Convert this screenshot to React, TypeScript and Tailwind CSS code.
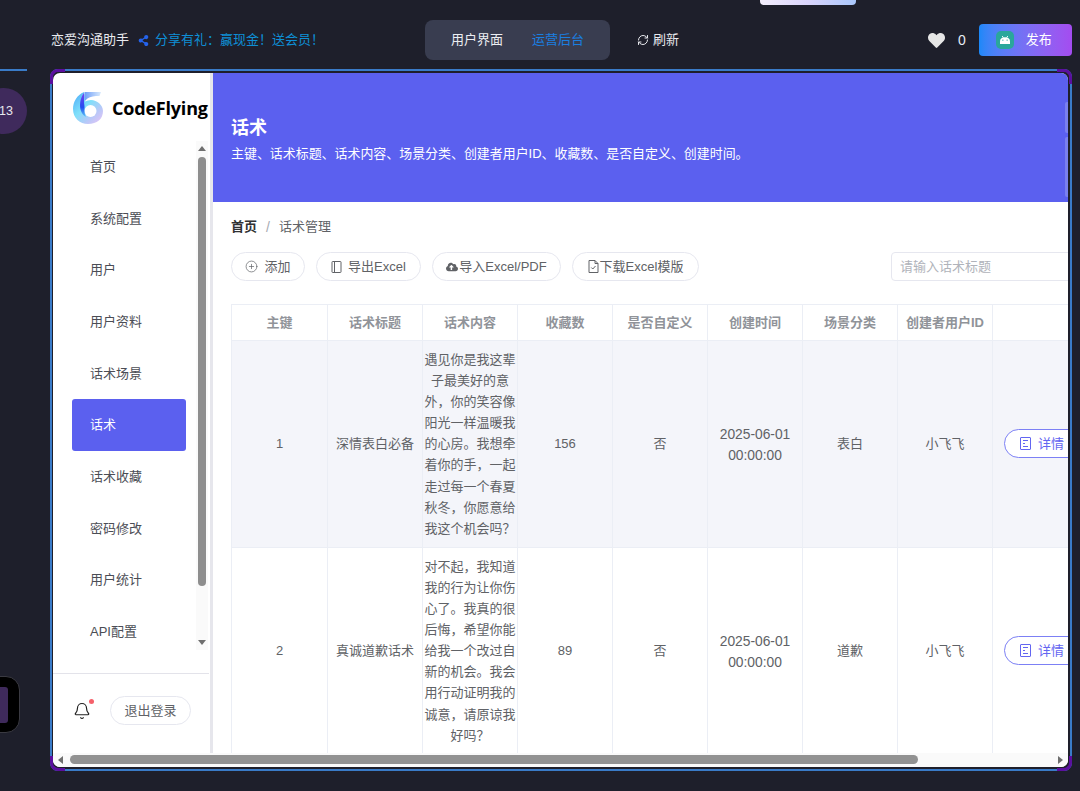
import React from "react";
import { Bell, CirclePlus, RefreshCw } from "lucide-react";
import { FaCloudUploadAlt, FaHeart, FaShareAlt } from "react-icons/fa";

const menu = ["首页", "系统配置", "用户", "用户资料", "话术场景", "话术", "话术收藏", "密码修改", "用户统计", "API配置"];

const columns = ["主键", "话术标题", "话术内容", "收藏数", "是否自定义", "创建时间", "场景分类", "创建者用户ID", ""];
const columnWidths = ["w-[96px]", "w-[95px]", "w-[95px]", "w-[95px]", "w-[95px]", "w-[95px]", "w-[95px]", "w-[95px]", "w-[139px]"];

const rows = [
  {
    id: "1",
    title: "深情表白必备",
    content: "遇见你是我这辈子最美好的意外，你的笑容像阳光一样温暖我的心房。我想牵着你的手，一起走过每一个春夏秋冬，你愿意给我这个机会吗？",
    count: "156",
    scene: "表白",
    bg: "bg-[#f4f5fa]",
  },
  {
    id: "2",
    title: "真诚道歉话术",
    content: "对不起，我知道我的行为让你伤心了。我真的很后悔，希望你能给我一个改过自新的机会。我会用行动证明我的诚意，请原谅我好吗？",
    count: "89",
    scene: "道歉",
    bg: "bg-white",
  },
];

function Logo() {
  return (
    <svg width="31" height="32" viewBox="0 0 31 32" className="shrink-0">
      <defs>
        <linearGradient id="outer" x1="0" y1="0" x2="0.9" y2="1">
          <stop offset="0" stopColor="#4aa8f8" />
          <stop offset="0.45" stopColor="#7fe0fa" />
          <stop offset="0.75" stopColor="#b9c8f8" />
          <stop offset="1" stopColor="#e2c4f6" />
        </linearGradient>
        <linearGradient id="bar" x1="0" y1="0" x2="1" y2="0">
          <stop offset="0" stopColor="#6f9ef8" />
          <stop offset="1" stopColor="#d9eafc" />
        </linearGradient>
        <linearGradient id="inner" x1="0" y1="0" x2="0" y2="1">
          <stop offset="0" stopColor="#7a3cf0" />
          <stop offset="0.6" stopColor="#2450f0" />
          <stop offset="1" stopColor="#5ac8f8" />
        </linearGradient>
      </defs>
      <path d="M11 0C4 3 0 10 0 17c0 9 7 15 15 15 9 0 15-5 15-13 0-6-6-11-12-11-2 0-4 .5-6 1.500 0-3 0-6-1-9.500Z" fill="url(#outer)" />
      <circle cx="17.500" cy="19" r="6" fill="#fff" />
      <path d="M11 1C7 6 6 14 8 19c1 3 3 5 5 6-1.500-3-2-6-1.500-9 .3-2-.5-4-.5-6 0-3.500.5-6 0-9Z" fill="url(#inner)" />
      <path d="M11.500 0H28l-1.500 4c-5 0-9 .5-12 2.500-1 .7-1.800 1.500-2.500 2.500 0-3.500-.3-6-.5-9Z" fill="url(#bar)" />
    </svg>
  );
}

function Android() {
  return (
    <svg width="10" height="8" viewBox="0 0 10 8" fill="#fff">
      <path d="M0 8V5.200C0 2.800 2.200 1.200 5 1.200s5 1.600 5 4V8Z" />
      <path d="M2.200 0l1.200 1.800M7.800 0 6.600 1.800" stroke="#fff" strokeWidth=".9" />
      <rect x="2.300" y="3.600" width="1.100" height="1.100" fill="#2aa79b" />
      <rect x="6.600" y="3.600" width="1.100" height="1.100" fill="#2aa79b" />
    </svg>
  );
}

function BookIcon() {
  return (
    <svg width="11" height="12" viewBox="0 0 11 12" fill="none" stroke="currentColor" strokeWidth="1">
      <rect x="1" y=".5" width="9" height="11" rx=".6" />
      <path d="M3.500.5v11" />
    </svg>
  );
}

function FileCheckIcon() {
  return (
    <svg width="11" height="13" viewBox="0 0 11 13" fill="none" stroke="currentColor" strokeWidth="1">
      <path d="M1 .5h6l3 3v9H1Z" />
      <path d="M7 .5v3h3M3.300 7.500l1.500 1.500 2.700-3" />
    </svg>
  );
}

function DetailIcon() {
  return (
    <svg width="11" height="13" viewBox="0 0 11 13" fill="none" stroke="currentColor" strokeWidth="1">
      <rect x=".5" y=".5" width="10" height="12" rx=".5" />
      <path d="M3 3.500h5M3 6.500h2M3 9.500h5" />
    </svg>
  );
}

function Tool({ icon, label, gap, width }: { icon: React.ReactNode; label: string; gap: string; width: string }) {
  return (
    <button className={`flex h-[29px] items-center justify-center rounded-full border border-[#e6e7ef] bg-white text-[13px] text-[#606266] ${gap} ${width}`}>
      {icon}
      <span>{label}</span>
    </button>
  );
}

function Triangle({ dir }: { dir: "up" | "down" | "left" | "right" }) {
  const cls = {
    up: "border-x-[4px] border-b-[5px] border-x-transparent border-b-[#6f6f6f]",
    down: "border-x-[4px] border-t-[5px] border-x-transparent border-t-[#6f6f6f]",
    left: "border-y-[4px] border-r-[5px] border-y-transparent border-r-[#6f6f6f]",
    right: "border-y-[4px] border-l-[5px] border-y-transparent border-l-[#6f6f6f]",
  }[dir];
  return <span className={`block h-0 w-0 ${cls}`} />;
}

export default function App() {
  return (
    <div className="relative flex h-[791px] w-[1080px] flex-col overflow-hidden bg-[#1e1f2b] font-['Liberation_Sans','Noto_Sans_CJK_SC',sans-serif]">
      <div className="absolute left-[760px] top-0 h-[5px] w-[96px] rounded-b-[4px] bg-gradient-to-r from-[#f4eefc] via-[#d9d4fb] to-[#a9c6fb]" />

      <header className="flex h-[69px] shrink-0 items-center pl-[51px] pt-[11px] text-[13px]">
        <span className="text-[#e8e9ee]">恋爱沟通助手</span>
        <FaShareAlt className="ml-[9px] text-[#2563eb]" size={11} />
        <span className="ml-[6px] w-[270px] text-[#0e8fd6]">分享有礼：赢现金！送会员！</span>
        <nav className="flex h-[40px] w-[185px] items-center rounded-[8px] bg-[#393d50] pl-[26px]">
          <span className="text-[#eceef2]">用户界面</span>
          <span className="ml-[29px] text-[#1a7fe0]">运营后台</span>
        </nav>
        <RefreshCw className="ml-[27px] text-[#e8e9ee]" size={12} strokeWidth={2} />
        <span className="ml-[4px] text-[#e8e9ee]">刷新</span>
        <FaHeart className="ml-[249px] text-[#e6e6e6]" size={17} />
        <span className="ml-[13px] text-[14px] text-[#e6ecf5]">0</span>
        <button className="ml-[13px] flex h-[32px] w-[93px] items-center rounded-[4px] bg-gradient-to-r from-[#1a88f8] to-[#a44cf0] pl-[17px] text-white">
          <span className="flex h-[18px] w-[18px] items-center justify-center rounded-[5px] bg-[#2aa79b]">
            <Android />
          </span>
          <span className="ml-[12px]">发布</span>
        </button>
      </header>

      <div className="flex min-h-0 flex-1">
        <aside className="relative w-[50px] shrink-0">
          <div className="h-[2px] w-[27px] bg-[#3a7bc8]" />
          <div className="absolute -left-[20px] top-[19px] flex h-[46px] w-[47px] items-center justify-end rounded-full bg-[#3f2a5c] pr-[14px] text-[12.5px] text-[#e8e9ee]">
            13
          </div>
          <div className="absolute -left-[30px] top-[607px] flex h-[57px] w-[50px] items-center rounded-[14px] border border-[#3a3a42] bg-black">
            <div className="ml-[17px] h-[36px] w-[20px] rounded-[3px] bg-[#3f2a5c]" />
          </div>
        </aside>

        <main className="relative h-[702px] w-[1022px] shrink-0 rounded-[8px] border-2 border-[#3a7bc8] pb-[2px] pl-[1px] pr-[2px] pt-[2px]">
          <span className="absolute -left-[2px] -top-[2px] h-[15px] w-[15px] rounded-tl-[8px] border-l-[3px] border-t-[3px] border-[#5b0f9e]" />
          <span className="absolute -right-[2px] -top-[2px] h-[15px] w-[15px] rounded-tr-[8px] border-r-[3px] border-t-[3px] border-[#5b0f9e]" />
          <span className="absolute -bottom-[2px] -left-[2px] h-[15px] w-[15px] rounded-bl-[8px] border-b-[3px] border-l-[3px] border-[#5b0f9e]" />
          <span className="absolute -bottom-[2px] -right-[2px] h-[15px] w-[15px] rounded-br-[8px] border-b-[3px] border-r-[3px] border-[#5b0f9e]" />

          <div className="flex h-[694px] w-[1015px] flex-col overflow-hidden rounded-[7px] bg-white">
            <div className="flex h-[680px] shrink-0">
              <div className="flex w-[160px] shrink-0 flex-col border-r-[3px] border-[#e6e6ec]">
                <div className="flex h-[68px] shrink-0 items-center pl-[20px] pt-[2px]">
                  <Logo />
                  <span className="ml-[8px] font-['Open_Sans',sans-serif] text-[18px] font-bold tracking-[-0.2px] text-black">CodeFlying</span>
                </div>
                <div className="flex h-[509px] shrink-0">
                  <ul className="w-[143px] shrink-0 overflow-hidden">
                    {menu.map((m) => (
                      <li
                        key={m}
                        className={`ml-[19px] flex h-[51.67px] w-[114px] items-center rounded-[3px] pl-[18px] text-[13px] ${m === "话术" ? "bg-[#5b60ef] text-white" : "text-[#4b4d55]"}`}
                      >
                        {m}
                      </li>
                    ))}
                  </ul>
                  <div className="flex w-[12px] shrink-0 flex-col items-center bg-[#fafafa] pt-[5px]">
                    <Triangle dir="up" />
                    <div className="mt-[6px] h-[429px] w-[8px] rounded-full bg-[#8e8e8e]" />
                    <div className="mt-auto pb-[5px]">
                      <Triangle dir="down" />
                    </div>
                  </div>
                </div>
                <div className="mt-[23px] w-[156px] flex-1 border-t border-[#e3e3ea] pl-[20px] pt-[22px]">
                  <div className="flex items-center">
                    <div className="relative">
                      <Bell size={18} strokeWidth={1.6} className="text-[#222]" />
                      <span className="absolute -right-[3px] -top-[3px] h-[5px] w-[5px] rounded-full bg-[#f5606a]" />
                    </div>
                    <button className="ml-[19px] h-[29px] w-[81px] rounded-full border border-[#e6e7ef] text-[13px] text-[#606266]">退出登录</button>
                  </div>
                </div>
              </div>

              <div className="relative min-w-0 flex-1 overflow-hidden">
                <span className="absolute right-0 top-[29px] h-[31px] w-[3px] rounded-l-[2px] bg-[#7a80f0]" />
                <span className="absolute right-0 top-[64px] h-[60px] w-[3px] rounded-l-[2px] bg-[#7a80f0]" />
                <div className="h-[129px] bg-[#5b60ef] pl-[18px] pt-[43px] text-white">
                  <h1 className="text-[18px] font-bold leading-[24px]">话术</h1>
                  <p className="mt-[5px] text-[12.95px] leading-[18px]">主键、话术标题、话术内容、场景分类、创建者用户ID、收藏数、是否自定义、创建时间。</p>
                </div>
                <div className="w-[918px] pl-[18px]">
                  <div className="flex h-[50px] items-center text-[13px]">
                    <span className="font-bold text-[#303133]">首页</span>
                    <span className="mx-[9px] text-[14px] text-[#a8abb2]">/</span>
                    <span className="text-[#606266]">话术管理</span>
                  </div>
                  <div className="flex items-center">
                    <Tool icon={<CirclePlus size={13} strokeWidth={1.3} />} label="添加" gap="gap-[6px]" width="w-[74px]" />
                    <Tool icon={<BookIcon />} label="导出Excel" gap="gap-[6px]" width="ml-[11px] w-[105px]" />
                    <Tool icon={<FaCloudUploadAlt size={12} />} label="导入Excel/PDF" gap="gap-[1px]" width="ml-[11px] w-[129px]" />
                    <Tool icon={<FileCheckIcon />} label="下载Excel模版" gap="gap-[1px]" width="ml-[11px] w-[127px]" />
                    <div className="ml-auto flex h-[29px] w-[240px] items-center rounded-[4px] border border-[#e6e7ef] pl-[8px] text-[13px] text-[#b0b3ba]">
                      请输入话术标题
                    </div>
                  </div>
                  <table className="mt-[23px] w-[900px] table-fixed border-collapse text-center text-[13px] leading-[21.1px] text-[#606266]">
                    <thead>
                      <tr className="h-[36px]">
                        {columns.map((c, i) => (
                          <th key={i} className={`border border-[#ebeef5] px-0 font-bold text-[#909399] ${columnWidths[i]}`}>
                            {c}
                          </th>
                        ))}
                      </tr>
                    </thead>
                    <tbody>
                      {rows.map((r) => (
                        <tr key={r.id} className={r.bg}>
                          <td className="border border-[#ebeef5]">{r.id}</td>
                          <td className="border border-[#ebeef5]">{r.title}</td>
                          <td className="border border-[#ebeef5] px-0 py-[8px]">{r.content}</td>
                          <td className="border border-[#ebeef5]">{r.count}</td>
                          <td className="border border-[#ebeef5]">否</td>
                          <td className="border border-[#ebeef5] pt-[2px] text-[13.8px]">
                            2025-06-01
                            <br />
                            00:00:00
                          </td>
                          <td className="border border-[#ebeef5]">{r.scene}</td>
                          <td className="border border-[#ebeef5]">小飞飞</td>
                          <td className="border border-[#ebeef5] pl-[11px] text-left">
                            <button className="flex h-[29px] w-[100px] items-center gap-[7px] rounded-full border border-[#7c80f5] bg-white pl-[15px] text-[#6366f1]">
                              <DetailIcon />
                              <span>详情</span>
                            </button>
                          </td>
                        </tr>
                      ))}
                    </tbody>
                  </table>
                </div>
              </div>
            </div>

            <div className="flex h-[14px] shrink-0 items-center bg-[#fafafa] pb-[1px] pl-[5px] pr-[5px]">
              <Triangle dir="left" />
              <div className="ml-[7px] h-[9px] w-[848px] rounded-full bg-[#929292]" />
              <div className="ml-auto">
                <Triangle dir="right" />
              </div>
            </div>
          </div>
        </main>
      </div>
    </div>
  );
}
